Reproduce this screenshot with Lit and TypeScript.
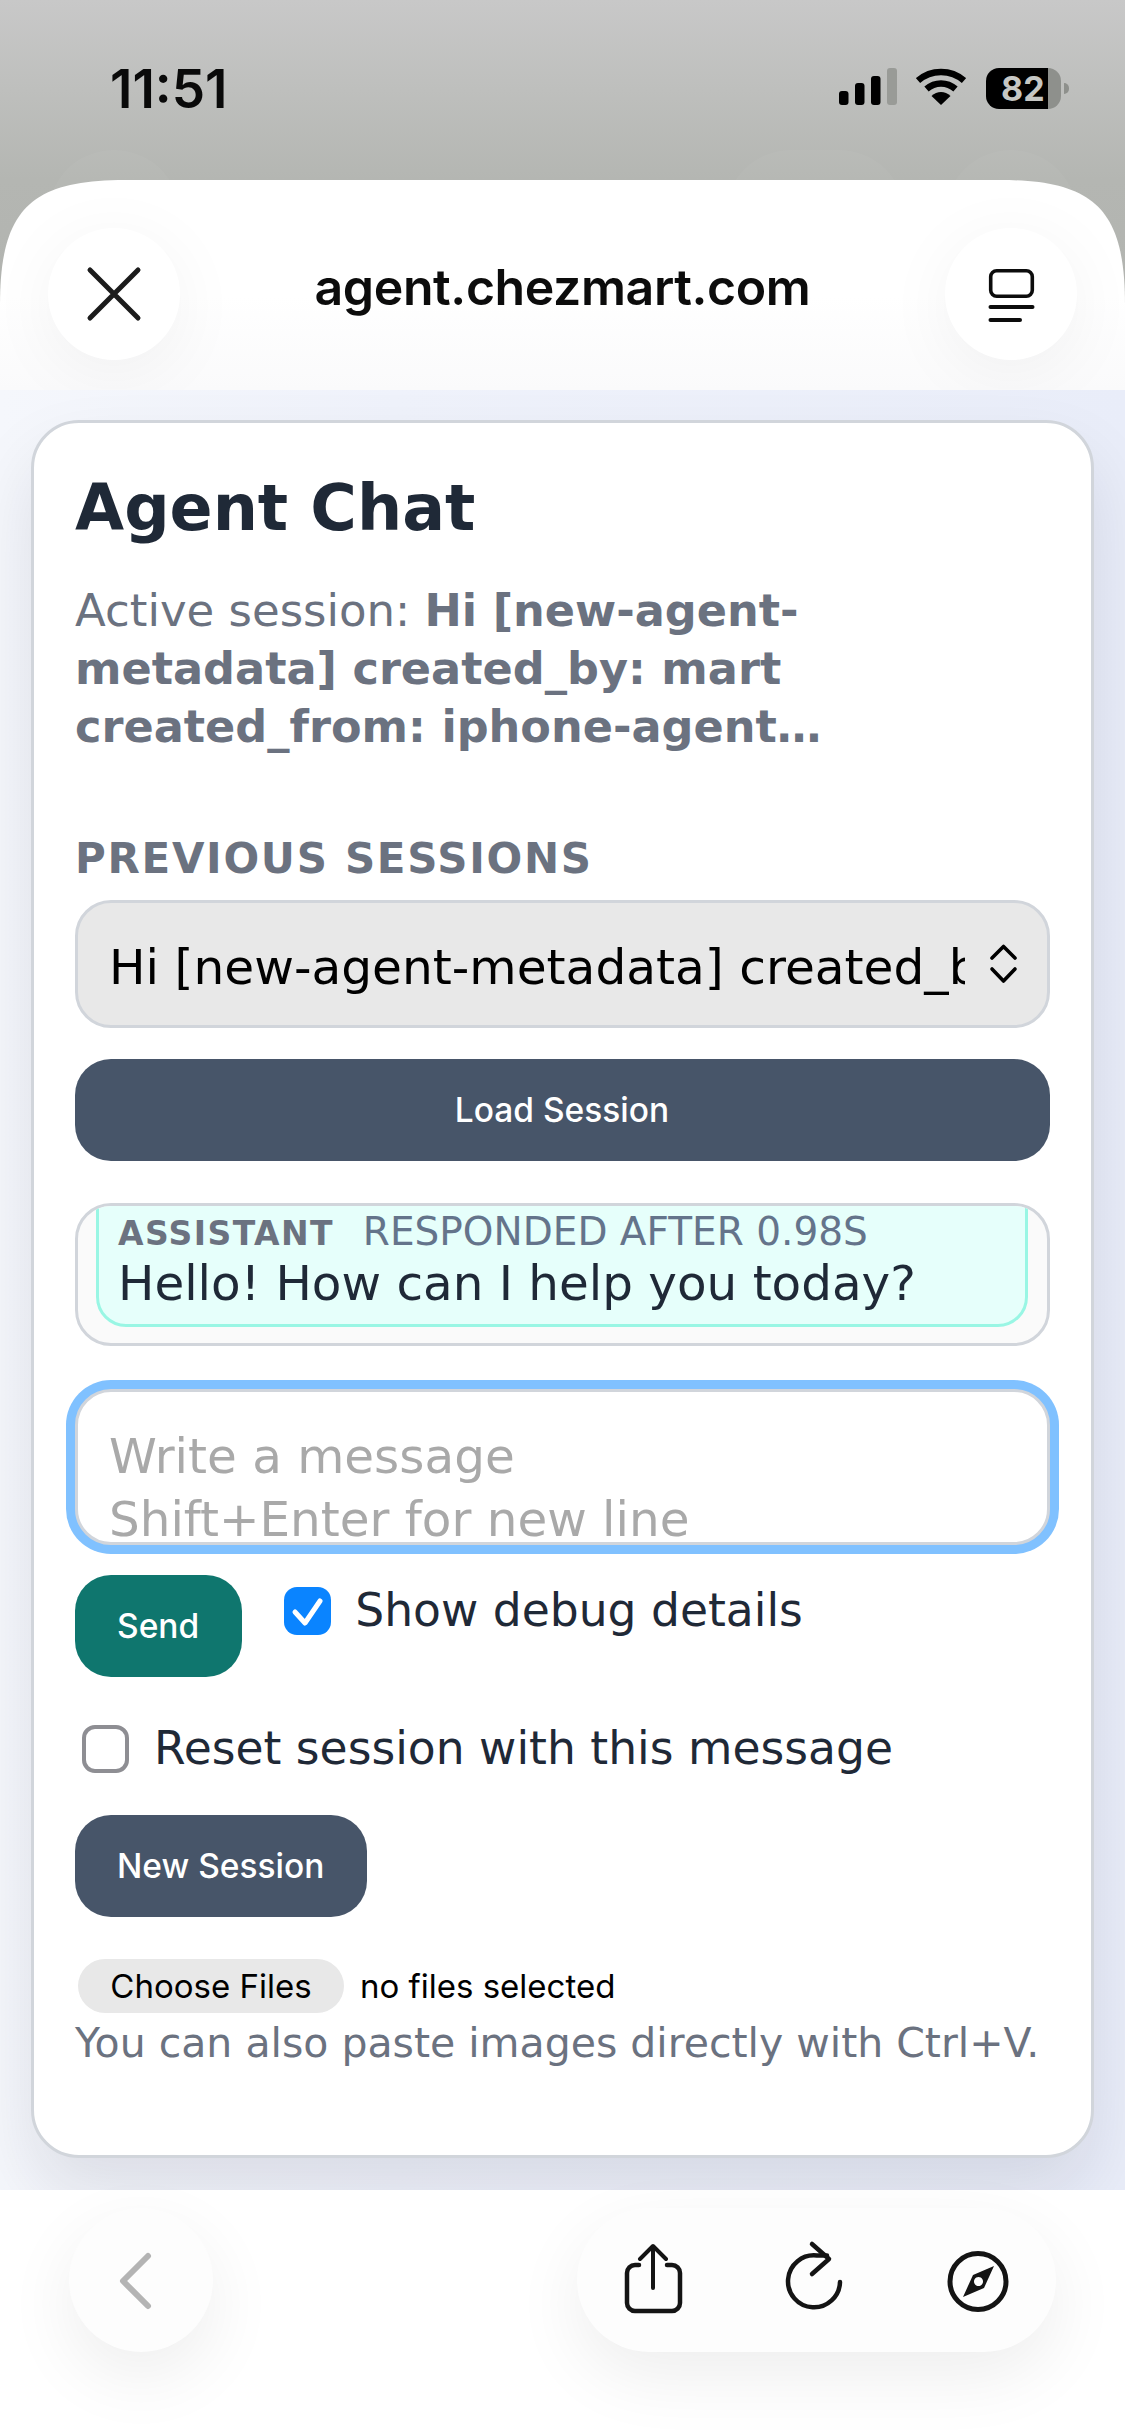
import { LitElement, html, css } from "lit";
import { customElement } from "lit/decorators.js";

@customElement("app-root")
export class AppRoot extends LitElement {
  static styles = css`
    :host { display: block; width: 1125px; height: 2436px; overflow: hidden; position: relative; background: #fff;
      font-family: "DejaVu Sans", sans-serif; }
    * { box-sizing: border-box; }
    .top { height: 390px; position: relative; background: linear-gradient(180deg, #c8c8c8 0%, #b4b6b2 46%, #b0b2ae 100%); }
    .status { height: 180px; display: flex; justify-content: space-between; padding: 65px 56px 0 110px; align-items: flex-start; }
    .time { font-family: Inter, sans-serif; font-weight: 600; font-size: 53px; line-height: 46px; letter-spacing: 0; color: #0a0a0a; margin-top: 1px; }
    .sicons { display: flex; align-items: flex-start; padding-top: 3px; }
    .sicons svg { display: block; }
    .wifi { margin-left: 19px; }
    .batt { margin-left: 20px; margin-top: 0; width: 75px; height: 41px; border-radius: 13px; overflow: hidden;
      background: linear-gradient(90deg, #000 0 62px, #8e908c 62px); display: flex; align-items: center; padding-left: 15px;
      font-family: Inter, sans-serif; font-weight: 700; font-size: 34px; color: #c6c7c4; letter-spacing: 0; line-height: 41px; }
    .nub { margin-left: 3px; margin-top: 15px; width: 5px; height: 11px; background: #8e908c; border-radius: 0 5px 5px 0; }
    .ghost { position: absolute; top: 150px; height: 132px; border-radius: 66px; background: rgba(255,255,255,.035); }
    .g1 { left: 48px; width: 132px; }
    .g2 { left: 725px; width: 180px; }
    .g3 { left: 945px; width: 132px; }
    .sheet { position: absolute; left: 0; right: 0; top: 180px; height: 210px;
      clip-path: path("M0 125C0 30 30 0 125 0L1000 0C1095 0 1125 30 1125 125L1125 210L0 210Z");
      display: flex; align-items: flex-start; justify-content: space-between; padding: 48px 48px 0; overflow: hidden;
      background: linear-gradient(180deg, #fff 55%, #fafafb 100%); }
    .round { width: 132px; height: 132px; border-radius: 50%; background: #fff; box-shadow: 0 12px 70px rgba(0,0,0,.05); flex: none; }
    .round svg { display: block; }
    .url { font-family: Inter, sans-serif; font-weight: 600; font-size: 50px; line-height: 80px; color: #0c0c0c; letter-spacing: -.4px; margin-top: 19px; }

    .main { height: 1800px; padding: 30px 31px 0; position: relative;
      background: linear-gradient(90deg, #f5f7fc 0%, #eff2fb 35%, #e9edf9 100%); }
    .card { height: 1738px; background: #fff; border: 3px solid #d1d5db; border-radius: 48px; padding: 0 41px;
      box-shadow: 0 36px 70px rgba(15,23,42,.1); display: flex; flex-direction: column; align-items: flex-start; }
    h1 { margin: 49px 0 0; font-size: 63.5px; line-height: 72px; font-weight: 700; color: #1f2937; white-space: nowrap; }
    .active { margin: 38px 0 0; font-size: 45px; line-height: 57px; color: #6b7280; width: 950px; }
    .active b { font-weight: 700; font-size: 44.6px; }
    .lab { margin: 79px 0 0; font-size: 42px; line-height: 48px; font-weight: 700; color: #6b7280; letter-spacing: 1.7px; }
    .select { width: 100%; height: 128px; margin-top: 17px; background: #e8e8e8; border: 3px solid #d1d5db; border-radius: 36px;
      display: flex; align-items: center; padding: 0 0 0 31px; font-size: 48.6px; color: #000; position: relative; }
    .seltext { width: 856px; overflow: hidden; white-space: nowrap; flex: none; padding-top: 6px; }
    .select svg { margin-left: 24px; flex: none; }
    .btn { border: 0; height: 102px; border-radius: 36px; background: #475569; color: #fff; font-family: Inter, sans-serif; font-weight: 500;
      font-size: 33.5px; padding: 0 43px 0 42px; display: block; flex: none; }
    .load { width: 100%; margin-top: 31px; }
    .msgs { width: 100%; height: 143px; margin-top: 42px; background: #fafafa; border: 3px solid #d1d5db; border-radius: 36px; overflow: hidden; padding: 0 19px 0 18px; }
    .bubble { height: 151px; margin-top: -30px; border: 3px solid #99f6e4; border-radius: 30px; background: #e6fffb; padding: 32px 18px 0 19px; }
    .meta { display: flex; align-items: baseline; font-size: 39px; line-height: 42px; color: #64748b; white-space: nowrap; }
    .meta b { font-size: 33px; color: #6b7280; letter-spacing: 1.4px; margin-right: 29px; }
    .hello { font-size: 48.4px; line-height: 60px; margin-top: -2px; color: #1f2937; white-space: nowrap; }
    textarea { display: block; width: 100%; height: 156px; margin-top: 43px; border: 3px solid #d1d5db; border-radius: 36px; outline: none; resize: none;
      box-shadow: 0 0 0 9px #80c1ff; padding: 33px 31px 0; font: 48.4px/63px "DejaVu Sans", sans-serif; background: #fff; overflow: hidden; flex: none; }
    textarea::placeholder { color: #a9a9a9; opacity: 1; }
    .row1 { display: flex; align-items: flex-start; margin-top: 30px; }
    .send { background: #0f766e; }
    .check { display: flex; align-items: center; font-size: 45.6px; line-height: 60px; color: #1f2937; white-space: nowrap; }
    .row1 .check { margin: 6px 0 0 42px; }
    .box { width: 47px; height: 48px; border-radius: 13px; flex: none; margin-right: 25px; display: block; }
    .box.on { background: #0a84ff; margin-right: 24px; }
    .box.off { border: 4px solid #8e8e93; background: #fff; }
    .reset { margin: 42px 0 0 7px; }
    .newb { margin-top: 36px; background: #475569; }
    .files { display: flex; align-items: center; margin: 42px 0 0 3px; font-family: Inter, sans-serif; font-size: 33px; color: #000; }
    .choose { height: 54px; width: 266px; border-radius: 27px; background: #e8e8e8; display: flex; align-items: center; justify-content: center; margin-right: 16px; }
    .help { margin: 0; font-size: 41px; line-height: 60px; color: #6b7280; white-space: nowrap; }

    .bottom { height: 246px; background: #fff; position: relative; display: flex; justify-content: space-between; padding: 18px 69px 0; }
    .bottom > div { height: 144px; background: #fdfdfd; box-shadow: 0 24px 70px rgba(0,0,0,.07); }
    .back { width: 144px; border-radius: 72px; }
    .pill { width: 479px; border-radius: 72px; }
    .bottom svg { display: block; }
  `;

  render() {
    return html`
      <div class="top">
        <div class="ghost g1"></div><div class="ghost g2"></div><div class="ghost g3"></div>
        <div class="status">
          <div class="time">11:51</div>
          <div class="sicons">
            <svg width="58" height="37" viewBox="0 0 58 37">
              <rect x="0" y="23" width="9.5" height="14" rx="3" fill="#000"/>
              <rect x="16" y="15" width="9.5" height="22" rx="3" fill="#000"/>
              <rect x="32" y="8" width="9.5" height="29" rx="3" fill="#000"/>
              <rect x="48" y="0" width="10" height="37" rx="3" fill="#999b97"/>
            </svg>
            <svg class="wifi" width="50" height="37" viewBox="0 0 50 37">
              <path d="M2 12.5C15 1 35 1 48 12.5" fill="none" stroke="#000" stroke-width="6.5" stroke-linejoin="round"/>
              <path d="M10.5 21C19 13.5 31 13.5 39.5 21" fill="none" stroke="#000" stroke-width="6.5"/>
              <path d="M15.5 28C21 22.5 29 22.5 34.5 28L25 37Z" fill="#000"/>
            </svg>
            <div class="batt">82</div>
            <div class="nub"></div>
          </div>
        </div>
        <div class="sheet">
          <div class="round">
            <svg width="132" height="132" viewBox="0 0 132 132"><path d="M42 42L90 90M90 42L42 90" stroke="#1c1c1c" stroke-width="5" stroke-linecap="round"/></svg>
          </div>
          <div class="url">agent.chezmart.com</div>
          <div class="round">
            <svg width="132" height="132" viewBox="0 0 132 132" fill="none" stroke="#0c0c0c" stroke-linecap="round">
              <rect x="45.7" y="42.7" width="41.6" height="25.6" rx="6" stroke-width="3.6"/>
              <path d="M45.5 79H87.5" stroke-width="4"/><path d="M45.5 92H75" stroke-width="4"/>
            </svg>
          </div>
        </div>
      </div>

      <div class="main">
        <div class="card">
          <h1>Agent Chat</h1>
          <p class="active">Active session: <b>Hi [new-agent-metadata] created_by: mart created_from: iphone-agent…</b></p>
          <div class="lab">PREVIOUS SESSIONS</div>
          <div class="select">
            <span class="seltext">Hi [new-agent-metadata] created_by: mart created_from</span>
            <svg width="30" height="40" viewBox="0 0 30 40" fill="none" stroke="#000" stroke-width="3.6" stroke-linecap="round" stroke-linejoin="round">
              <path d="M3 14L14.5 2.5L26 14"/><path d="M3 25L14.5 37L26 25"/>
            </svg>
          </div>
          <button class="btn load">Load Session</button>
          <div class="msgs">
            <div class="bubble">
              <div class="meta"><b>ASSISTANT</b><span>RESPONDED AFTER 0.98S</span></div>
              <div class="hello">Hello! How can I help you today?</div>
            </div>
          </div>
          <textarea placeholder=${"Write a message\nShift+Enter for new line"}></textarea>
          <div class="row1">
            <button class="btn send">Send</button>
            <label class="check">
              <svg class="box on" viewBox="0 0 47 48" width="47" height="48"><path d="M11 25L21 36L36 14" fill="none" stroke="#fff" stroke-width="5" stroke-linecap="round" stroke-linejoin="round"/></svg>
              Show debug details
            </label>
          </div>
          <label class="check reset"><span class="box off"></span>Reset session with this message</label>
          <button class="btn newb">New Session</button>
          <div class="files"><span class="choose">Choose Files</span><span>no files selected</span></div>
          <p class="help">You can also paste images directly with Ctrl+V.</p>
        </div>
      </div>

      <div class="bottom">
        <div class="back">
          <svg width="144" height="144" viewBox="0 0 144 144"><path d="M79 48L54 73L79 98" fill="none" stroke="#b4b4b4" stroke-width="6" stroke-linecap="round" stroke-linejoin="round"/></svg>
        </div>
        <div class="pill">
          <svg width="479" height="144" viewBox="0 0 479 144" fill="none" stroke="#141414" stroke-linecap="round" stroke-linejoin="round">
            <path d="M62 57H58a8 8 0 0 0-8 8V95a8 8 0 0 0 8 8H95a8 8 0 0 0 8-8V65a8 8 0 0 0-8-8H90" stroke-width="4.5"/>
            <path d="M76 80V39M63 51L76 38L89 51" stroke-width="4"/>
            <path d="M263 74A26 26 0 1 1 240 47.5H250" stroke-width="4.5"/>
            <path d="M235 36L252 51L235 66" stroke-width="4.5"/>
            <circle cx="401" cy="73.5" r="28" stroke-width="5"/>
            <path fill="#141414" stroke="none" fill-rule="evenodd" d="M417 58L407 80L386 89L396 67ZM401.5 69a4.5 4.5 0 1 0 .01 0Z"/>
          </svg>
        </div>
      </div>
    `;
  }
}
